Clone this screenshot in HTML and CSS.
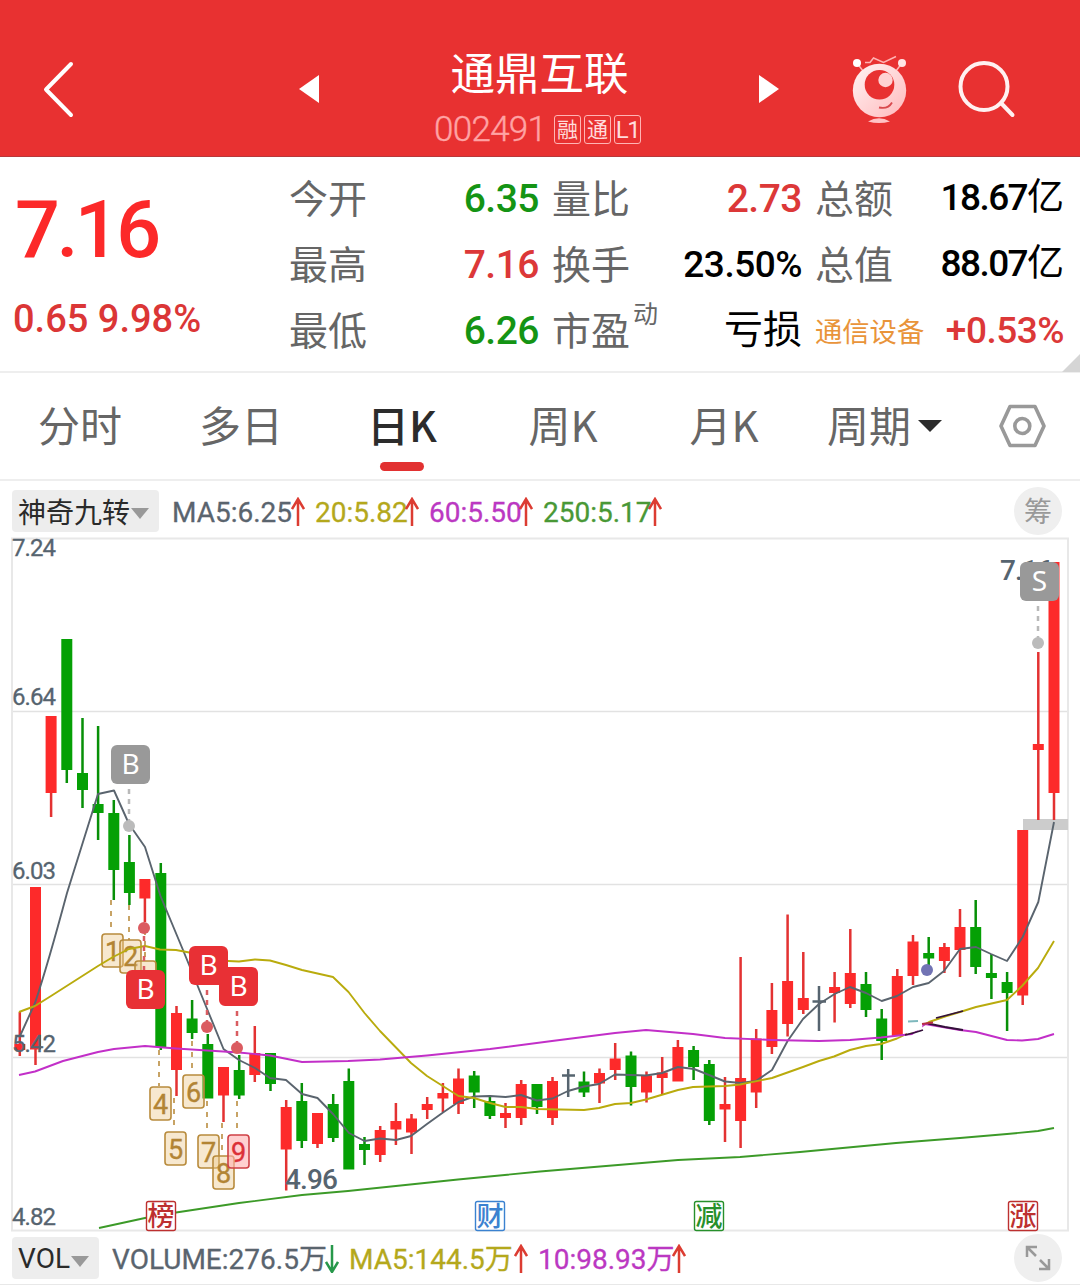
FILE: index.html
```html
<!DOCTYPE html>
<html lang="zh-CN">
<head>
<meta charset="utf-8">
<title>通鼎互联 002491</title>
<link rel="stylesheet" href="styles.css">
</head>
<body>
<header class="header">
  <svg class="icon-back" viewBox="0 0 34 58"><path d="M30 4L5 29.500L30 55"/></svg>
  <svg class="icon-tri prev" viewBox="0 0 20 28"><path d="M20 0V28L0 14z"/></svg>
  <div class="title">
    <h1>通鼎互联</h1>
    <div class="code-row"><span class="code">002491</span><span class="badge">融</span><span class="badge">通</span><span class="badge latin">L1</span></div>
  </div>
  <svg class="icon-tri next" viewBox="0 0 20 28"><path d="M0 0V28L20 14z"/></svg>
  <svg class="icon-robot" viewBox="850 52 60 74">
    <defs><linearGradient id="body" x1="0" y1="0" x2="1" y2="1"><stop offset="0" stop-color="#fff4f4"/><stop offset="1" stop-color="#ffb9bc"/></linearGradient></defs>
    <path class="thin" d="M857 63L863 71M902 63L896 71M865 62.500H870L873.500 58L883.500 62.500L896 56.500"/>
    <circle cx="857" cy="63" r="4" fill="#fff"/><circle cx="902" cy="63" r="4" fill="#ffe5e5"/>
    <circle cx="879.500" cy="90.500" r="26.700" fill="url(#body)"/>
    <circle cx="879.500" cy="84.800" r="14.800" fill="#e83131"/>
    <circle cx="885.500" cy="80" r="7.200" fill="#ffd2d3"/>
    <path d="M879 107.500Q888 109.500 892 102.500" fill="none" stroke="#d94a4e" stroke-width="1.800"/>
    <path d="M868 121.500Q879 115 890 121.500Q879 124.500 868 121.500z" fill="#ffc3c5"/>
  </svg>
  <svg class="icon-search" viewBox="956 58 62 62"><circle cx="984" cy="86.500" r="23.500"/><path d="M1001 103L1012.500 115"/></svg>
</header>

<section class="quote">
  <div class="price">
    <div class="last">7.16</div>
    <div class="change">0.65 9.98%</div>
  </div>
  <dl class="stats">
    <div><dt>今开</dt><dd class="green">6.35</dd></div>
    <div><dt>量比</dt><dd class="red">2.73</dd></div>
    <div><dt>总额</dt><dd class="amount">18.67<span>亿</span></dd></div>
    <div><dt>最高</dt><dd class="red">7.16</dd></div>
    <div><dt>换手</dt><dd class="percent">23.50%</dd></div>
    <div><dt>总值</dt><dd class="amount">88.07<span>亿</span></dd></div>
    <div><dt>最低</dt><dd class="green">6.26</dd></div>
    <div><dt>市盈<sup>动</sup></dt><dd class="word">亏损</dd></div>
    <div><dt class="sector">通信设备</dt><dd class="red percent">+0.53%</dd></div>
  </dl>
  <i class="corner"></i>
</section>

<nav class="tabs">
  <a>分时</a><a>多日</a><a class="active">日K</a><a>周K</a><a>月K</a>
  <a class="period">周期<svg viewBox="0 0 24 12"><path d="M0 0H24L12 12z"/></svg></a>
  <svg class="icon-gear" viewBox="998 403 50 46"><path d="M1010 406.500H1035L1044 426L1035 445.500H1010L1001 426z"/><circle cx="1022.300" cy="426" r="7.500"/></svg>
</nav>

<div class="indicator top">
  <span class="chip">神奇九转<i></i></span>
  <span class="ma c5">MA5:6.25</span><svg class="arrow" viewBox="0 0 14 29"><path d="M1 12L7 2L13 12M7 2V29"/></svg>
  <span class="ma c20">20:5.82</span><svg class="arrow" viewBox="0 0 14 29"><path d="M1 12L7 2L13 12M7 2V29"/></svg>
  <span class="ma c60">60:5.50</span><svg class="arrow" viewBox="0 0 14 29"><path d="M1 12L7 2L13 12M7 2V29"/></svg>
  <span class="ma c250">250:5.17</span><svg class="arrow" viewBox="0 0 14 29"><path d="M1 12L7 2L13 12M7 2V29"/></svg>
  <span class="round">筹</span>
</div>

<svg class="chart" viewBox="0 538 1080 694">
  <path class="grid" d="M12 711.500H1068M12 884.500H1068M12 1057.500H1068"/>
  <rect class="frame" x="12" y="538.500" width="1056" height="692"/>
  <g class="axis">
    <text x="12" y="556" textLength="44">7.24</text>
    <text x="12" y="705" textLength="44">6.64</text>
    <text x="12" y="879" textLength="44">6.03</text>
    <text x="12" y="1225" textLength="44">4.82</text>
  </g>
  <rect x="1023" y="819" width="45" height="11" fill="#ccc"/>

  <g class="up">
    <path class="wick" d="M19.800 1012V1056M35.500 1040V1065M51.100 780V817M144.900 890V922M176.500 1006V1096M223.500 1080V1122M254.800 1026V1082M286.200 1100V1190.500M317.500 1130V1148M380.200 1126V1162M395.900 1103V1145M411.500 1114V1154M427.200 1097V1119M442.900 1083V1112M458.500 1068.500V1114M505.500 1103V1128M521.200 1080V1125M552.500 1077V1125M599.500 1068.500V1103M615.200 1043V1080M646.500 1071.500V1102.500M662.200 1057V1095M677.900 1040V1080M725 1077V1142M740.600 957V1148M756.200 1029V1108M771.900 983V1054M787.600 914.500V1036.500M803.300 952V1014M834.600 972V1022.500M850.300 929V1008M897.300 969V1035M913 935V985M944.400 943V973M960 909V977M1022.700 990V1005M1038.300 652V820M1054 780V820"/>
    <path class="body" d="M19.800 1044V1050M35.500 887V1049.500M51.100 716V793M144.900 879V898.500M176.500 1013V1070M223.500 1067V1095.500M254.800 1053V1075M286.200 1107V1149.500M317.500 1113V1144M380.200 1130V1155M395.900 1121V1129.500M411.500 1118.500V1132.500M427.200 1104V1110M442.900 1093V1098.500M458.500 1078.500V1104M505.500 1113V1118M521.200 1084V1118M552.500 1081V1118M599.500 1073V1083.500M615.200 1058.500V1070M646.500 1075.500V1092.500M662.200 1072.500V1078M677.900 1047V1081.500M725 1104V1109.500M740.600 1078V1121M756.200 1038.500V1092.500M771.900 1010V1047M787.600 981V1024M803.300 998V1010M834.600 987V993M850.300 973V1004M897.300 976V1036M913 941.500V976M944.400 947V961M960 927V950M1022.700 830V995.500M1038.300 744V750M1054 562V793"/>
  </g>
  <g class="down">
    <path class="wick" d="M66.800 760V783M82.500 718V808M98.100 726V840M113.800 800V900M129.400 835V905M160.800 863V1050M192.100 1000V1039M207.800 1034V1060M239.200 1055V1099M270.500 1070V1091M301.800 1083V1148M333.200 1094V1142M348.800 1068.500V1100M364.500 1137V1165M474.200 1071V1108M489.900 1095V1119M537 1100V1114M584 1071.500V1097M631 1051.500V1105.500M693.600 1046V1080M709.300 1060V1125M866 972V1017M881.700 1009V1060M928.700 937V965M975.700 900V974M991.400 954V999M1007.100 972V1031"/>
    <path class="body" d="M66.800 639V770M82.500 773V790M98.100 804V813M113.800 813V870M129.400 862V893M160.800 873V1047M192.100 1018.500V1033M207.800 1044V1098.500M239.200 1070V1095.500M270.500 1053V1084M301.800 1101V1141M333.200 1104V1138M348.800 1081V1169.500M364.500 1144V1150M474.200 1075.500V1092.500M489.900 1101V1116M537 1084V1107M584 1081.500V1092.500M631 1055.500V1087M693.600 1050V1067M709.300 1064V1121M866 984V1010M881.700 1018.500V1041M928.700 953V958.500M975.700 927V967M991.400 973V978M1007.100 982V993"/>
  </g>
  <path class="flat" d="M568.200 1069V1097M562 1075.500H575M819 986V1031M812.500 1001.500H826"/>

  <path class="tail" d="M111 900V933M129 905V940M145 930V962M159 1050V1086M192 1041V1074M174 1098V1131M207 1101V1134M222 1123V1155M237 1101V1134"/>
  <g class="tag">
    <rect x="102" y="934" width="21" height="33" rx="3"/><text x="112.500" y="961">1</text>
    <rect x="120" y="940" width="21" height="33" rx="3"/><text x="130.500" y="966">2</text>
    <rect x="135" y="961" width="21" height="33" rx="3"/>
    <rect x="150" y="1087" width="21" height="33" rx="3"/><text x="160.500" y="1114">4</text>
    <rect x="165" y="1132" width="21" height="33" rx="3"/><text x="175.500" y="1159">5</text>
    <rect x="183" y="1075" width="21" height="33" rx="3"/><text x="193.500" y="1102">6</text>
    <rect x="198" y="1135" width="21" height="33" rx="3"/><text x="208.500" y="1162">7</text>
    <rect x="213" y="1156" width="21" height="33" rx="3"/><text x="223.500" y="1183">8</text>
    <g class="hot"><rect x="228" y="1135" width="21" height="33" rx="3"/><text x="238.500" y="1162">9</text></g>
  </g>

  <g class="lines">
    <path stroke="#5a646e" d="M20 1036L35 1003C46 970 56 934 67 893L98 794L114 790.500L129 824L145 847L160.500 896L183 950L207.500 1010L223.500 1049L239 1060L255 1068L270 1078L286 1080L302 1094L317.500 1098L333 1114L349 1133L364.500 1141L380 1138.500L396 1140L411 1136L427 1124L443 1112.500L458.500 1102L474 1096.500L490 1096L505.500 1097L521 1095L537 1100.500L552.500 1098.500L568 1091L584 1086.500L599 1084L615 1074.500L646 1075.500L662 1073L678 1067L694 1069L709 1075L725 1081.500L740.600 1083L756 1081L772 1070L787.600 1041L803 1019L819 1004L834.600 994L850 987L866 993L881.700 1001L897 996L913 987L928.700 983L944 971L960 949L976 947L991 954L1007 961L1022.700 937L1038.300 902L1054 822"/>
    <path stroke="#b9ab0d" d="M19 1012L35 1006L51 996L98 966L113 957L129 949L145 946L160 949.500L176 950L192 953L207 960L239 961.500L255 959.500L270 960.500L286 965L302 970L333 977L348.500 992L364.500 1013L380 1031L411 1063L427 1076L458.500 1096L474 1098L490 1103L505.500 1107L521 1107L537 1109L584 1110L599 1108L615 1104L631 1103L646 1099.500L678 1090L693 1087L725 1086L740 1084.500L772 1078L803 1067L819 1061L834 1056.500L850 1050L866 1046L881 1044L897 1038.500L913 1031L929 1022L945 1016.500L960 1012L976 1007L1007 1000L1022 986L1038 968L1054 941"/>
    <path stroke="#c22fc8" d="M19 1075L35 1071.500L63 1061L98 1052L114 1049L145 1046L176 1048.500L239 1052.500L270 1055.500L302 1062L348 1061L380 1059.500L427 1055.500L490 1049L552 1041L615 1033L646 1030L693 1034L725 1038L772 1040L819 1041L850 1040L881 1037.500L912 1034L925 1024L960 1030L976 1032L1007 1040L1022 1040.500L1038 1039L1054 1034"/>
    <path stroke="#3c9a28" d="M99 1228L145 1218L176 1212.500L239 1203L302 1195L348 1191L458 1179.500L540 1171.500L678 1160L740 1157L800 1152L896 1143L960 1138L1007 1134L1038 1131L1054 1128"/>
  </g>
  <path d="M904 1020L923 1018L922 1029L907 1034z" fill="#fff"/>
  <path class="smudge" d="M905 1035L915 1032.500L923 1030M936 1018L963 1011M928 1023.500L945 1027L963 1030" stroke="#34123b"/>
  <path class="smudge" d="M908 1021.500L918 1021" stroke="#7eb8bd"/>
  <path class="smudge" d="M922 1024L933 1022.500" stroke="#b62f45" stroke-width="3"/>

  <g class="axis"><text x="12" y="1052" textLength="44">5.42</text></g>
  <g class="extreme"><text x="285" y="1189" textLength="53">4.96</text><text x="1000" y="580" textLength="53">7.16</text></g>

  <g class="signal old">
    <path d="M129 789V822M1038 606V640"/><circle cx="129" cy="826" r="6"/><circle cx="1038" cy="643" r="6"/>
    <rect x="111" y="745" width="39" height="39" rx="6"/><text x="130.500" y="774">B</text>
    <rect x="1020" y="562" width="39" height="39" rx="6"/><text x="1039.500" y="591">S</text>
  </g>
  <g class="signal">
    <path d="M144 936V970M207 990V1024M237 1011V1044"/><circle cx="144" cy="928" r="6"/><circle cx="207" cy="1027" r="6"/><circle cx="237" cy="1048" r="6"/>
    <rect x="126" y="970" width="39" height="39" rx="6"/><text x="145.500" y="999">B</text>
    <rect x="189" y="946" width="39" height="39" rx="6"/><text x="208.500" y="975">B</text>
    <rect x="219" y="967" width="39" height="39" rx="6"/><text x="238.500" y="996">B</text>
  </g>
  <circle cx="927" cy="970" r="6" fill="#7173b4"/>

  <g class="event">
    <g stroke="#bd3030" fill="#bd3030"><rect x="146.500" y="1201.500" width="29" height="29" rx="2"/><text x="161" y="1225.500">榜</text></g>
    <g stroke="#3b82d0" fill="#3b82d0"><rect x="475.500" y="1201.500" width="29" height="29" rx="2"/><text x="490" y="1225.500">财</text></g>
    <g stroke="#27902b" fill="#27902b"><rect x="694.500" y="1201.500" width="29" height="29" rx="2"/><text x="709" y="1225.500">减</text></g>
    <g stroke="#bd3030" fill="#bd3030"><rect x="1008.500" y="1201.500" width="29" height="29" rx="2"/><text x="1023" y="1225.500">涨</text></g>
  </g>
</svg>

<div class="indicator bottom">
  <span class="chip">VOL<i></i></span>
  <span class="ma c5">VOLUME:276.5万</span><svg class="arrow fall" viewBox="0 0 14 29"><path d="M1 18L7 28L13 18M7 28V1"/></svg>
  <span class="ma c20">MA5:144.5万</span><svg class="arrow" viewBox="0 0 14 29"><path d="M1 12L7 2L13 12M7 2V29"/></svg>
  <span class="ma c60">10:98.93万</span><svg class="arrow" viewBox="0 0 14 29"><path d="M1 12L7 2L13 12M7 2V29"/></svg>
  <span class="round"><svg viewBox="0 0 48 48"><path d="M13 23V13H23M13.500 13.500L22 22M26 26L34.500 34.500M35 25V35H25"/></svg></span>
</div>
</body>
</html>
```

FILE: styles.css
```css
* { box-sizing: border-box; }
body {
  margin: 0;
  width: 1080px;
  height: 1285px;
  overflow: hidden;
  background: #fff;
  color: #000;
  font-family: Roboto, "Noto Sans CJK SC", sans-serif;
}
svg { display: block; flex: none; }

.header {
  display: flex;
  height: 157px;
  background: #e83131;
  border-bottom: 1px solid #b8383a;
}
.icon-back { width: 34px; height: 58px; margin: 60px 0 0 41px; fill: none; stroke: #fff; stroke-width: 4; stroke-linecap: round; stroke-linejoin: round; }
.icon-tri { width: 20px; height: 28px; margin-top: 75px; fill: #fff; }
.prev { margin-left: 224px; }
.title { width: 440px; height: 156px; }
.title h1 {
  margin: 38px 0 0 1px;
  font: 400 44.500px/66px "Noto Sans CJK SC", sans-serif;
  text-align: center;
  color: #fff;
}
.code-row { display: flex; height: 42px; margin-top: 4px; padding-left: 115px; align-items: center; }
.code { width: 120px; font-size: 35px; font-weight: 300; letter-spacing: -0.700px; color: #ffa3a4; -webkit-text-stroke: .4px #ffa3a4; }
.badge {
  width: 27px;
  height: 29px;
  margin-right: 3px;
  border: 1px solid #ffb4b4;
  border-radius: 3px;
  font: 400 21px/25px "Noto Sans CJK SC", sans-serif;
  text-align: center;
  color: #ffdcdc;
}
.badge.latin { font-size: 24px; font-family: Roboto, sans-serif; line-height: 28px; letter-spacing: -1.500px; }
.icon-robot { width: 60px; height: 74px; margin: 52px 0 0 71px; }
.icon-robot .thin { fill: none; stroke: #ffb3b3; stroke-width: 1.500; }
.icon-search { width: 62px; height: 62px; margin: 58px 0 0 46px; fill: none; stroke: #fff1f1; stroke-width: 4; stroke-linecap: round; }

.quote { display: flex; position: relative; height: 216px; border-bottom: 2px solid #eee; }
.price { width: 289px; padding-left: 13px; }
.last { margin: 27px 0 0 2px; font-size: 79px; line-height: 92px; font-weight: 500; letter-spacing: -3.500px; color: #fc2929; }
.change { margin-top: 21px; font-size: 38px; line-height: 44px; color: #db3636; font-weight: 500; white-space: nowrap; }
.stats {
  display: grid;
  grid-template-columns: 250px 250px 249px;
  grid-auto-rows: 66px;
  column-gap: 13px;
  margin: 8px 0 0;
}
.stats > div { display: flex; justify-content: space-between; align-items: center; white-space: nowrap; }
.stats dt { position: relative; padding-bottom: 5px; font: 400 39px/60px "Noto Sans CJK SC", sans-serif; color: #666; }
.stats dd { margin: 0; padding-top: 1px; font-size: 39px; line-height: 60px; font-weight: 500; letter-spacing: -0.500px; }
.stats .percent { font-size: 37px; letter-spacing: -0.500px; }
.stats .amount { font-size: 37px; padding: 0; letter-spacing: -1.600px; }
.stats .amount span { font-weight: 400; letter-spacing: 0; }
.stats .word { padding: 0 0 1px; font-weight: 400; letter-spacing: 0; }
.stats sup { position: absolute; left: 81px; top: 2px; font-size: 25px; line-height: 25px; }
.stats .sector { padding-bottom: 1px; font-size: 27.300px; color: #e9943a; }
.green { color: #149414; }
.red { color: #dc3838; }
.corner { position: absolute; right: 0; bottom: -1px; border: 9px solid; border-color: transparent #d5d5d5 #d5d5d5 transparent; }

.tabs {
  display: grid;
  grid-template-columns: repeat(4, 161px) 161px 160px 115px;
  height: 108px;
  border-bottom: 2px solid #eee;
}
.tabs a { position: relative; height: 106px; padding-right: 1px; font: 400 42px/101px "Noto Sans CJK SC", sans-serif; text-align: center; color: #666; }
.tabs .active { color: #2c2c2c; font-weight: 500; }
.tabs .active::after { content: ""; position: absolute; left: 58px; top: 89px; width: 44px; height: 9px; border-radius: 5px; background: #e23131; }
.tabs .period { display: flex; align-items: flex-start; justify-content: center; gap: 7px; }
.tabs .period svg { width: 24px; height: 12px; margin-top: 47px; fill: #2c2c2c; }
.icon-gear { width: 50px; height: 46px; margin: 30px 0 0 33px; fill: none; stroke: #999; stroke-width: 3.600; stroke-linejoin: round; }

.indicator { display: flex; align-items: center; }
.top { height: 57px; padding: 3px 0 0 12px; }
.bottom { height: 53px; padding-left: 12px; border-bottom: 1px solid #e8e8e8; }
.chip {
  display: flex;
  align-items: center;
  height: 42px;
  padding-left: 6px;
  border-radius: 4px;
  background: #ededed;
  font-size: 28px;
  line-height: 40px;
  color: #2a2a2a;
}
.top .chip { width: 147px; margin-right: 13px; font-family: "Noto Sans CJK SC", sans-serif; }
.bottom .chip { width: 87px; margin-right: 13px; padding-top: 2px; }
.chip i { margin: 4px 0 0 1px; border: 9.500px solid transparent; border-top: 11px solid #999; border-bottom: 0; }
.ma { padding-top: 4px; font-size: 28px; line-height: 40px; white-space: nowrap; -webkit-text-stroke: .3px; }
.top .ma { width: 90px; }
.top .c5 { width: 119px; }
.top .c250 { width: 105px; }
.bottom .c5 { width: 213px; }
.bottom .c20 { width: 165px; }
.bottom .c60 { width: 134px; }
.c5 { color: #5a646e; }
.c20 { color: #b4a81c; }
.c60 { color: #bb38c2; }
.c250 { color: #499836; }
.arrow { width: 14px; height: 29px; margin-right: 10px; fill: none; stroke: #dc3c32; stroke-width: 2.500; }
.fall { stroke: #27984a; }
.round {
  width: 48px;
  height: 48px;
  margin: 0 18px 0 auto;
  border-radius: 50%;
  background: #efefef;
  font: 400 28px/46px "Noto Sans CJK SC", sans-serif;
  text-align: center;
  color: #999;
}
.round path { fill: none; stroke: #999; stroke-width: 2.500; }

.chart { width: 1080px; height: 694px; overflow: visible; }
.grid { stroke: #e2e2e2; stroke-width: 1.300; }
.frame { fill: none; stroke: #e8e8e8; stroke-width: 2; }
.axis { font-size: 24px; fill: #56646f; stroke: #56646f; stroke-width: .3px; }
.extreme { font-size: 28px; fill: #56646f; font-weight: 500; }
.wick { stroke-width: 2.500; }
.body { stroke-width: 11; }
.up .wick { stroke: #e33232; }
.up .body { stroke: #fd2a2a; }
.down .wick { stroke: #079007; }
.down .body { stroke: #05a005; }
.flat { stroke: #56646f; stroke-width: 2.500; }
.lines { fill: none; stroke-width: 1.900; stroke-linejoin: round; }
.smudge { fill: none; stroke-width: 1.800; }
.tail { stroke: #c29a55; stroke-width: 1.800; stroke-dasharray: 5 6; }
.tag rect { fill: #ecc98d; fill-opacity: .42; stroke: #b88b3c; stroke-width: 1.600; }
.tag text { font-size: 27px; text-anchor: middle; fill: #b28434; stroke: #b28434; stroke-width: .4px; }
.tag .hot rect { fill: #ffb0b0; fill-opacity: .6; stroke: #cf4046; }
.tag .hot text { fill: #dc3038; stroke: #dc3038; }
.signal path { stroke: #d95c61; stroke-width: 2.500; stroke-dasharray: 5 5; }
.signal circle { fill: #db5b60; }
.signal rect { fill: #e83035; }
.signal text { font: 28px "Noto Sans", sans-serif; text-anchor: middle; fill: #fff; }
.signal.old path { stroke: #b9b9b9; }
.signal.old circle { fill: #bbb; }
.signal.old rect { fill: #999; }
.event rect { fill: #fff; stroke-width: 1.400; }
.event text { font: 500 27px "Noto Sans CJK SC", sans-serif; text-anchor: middle; stroke: none; }
```
